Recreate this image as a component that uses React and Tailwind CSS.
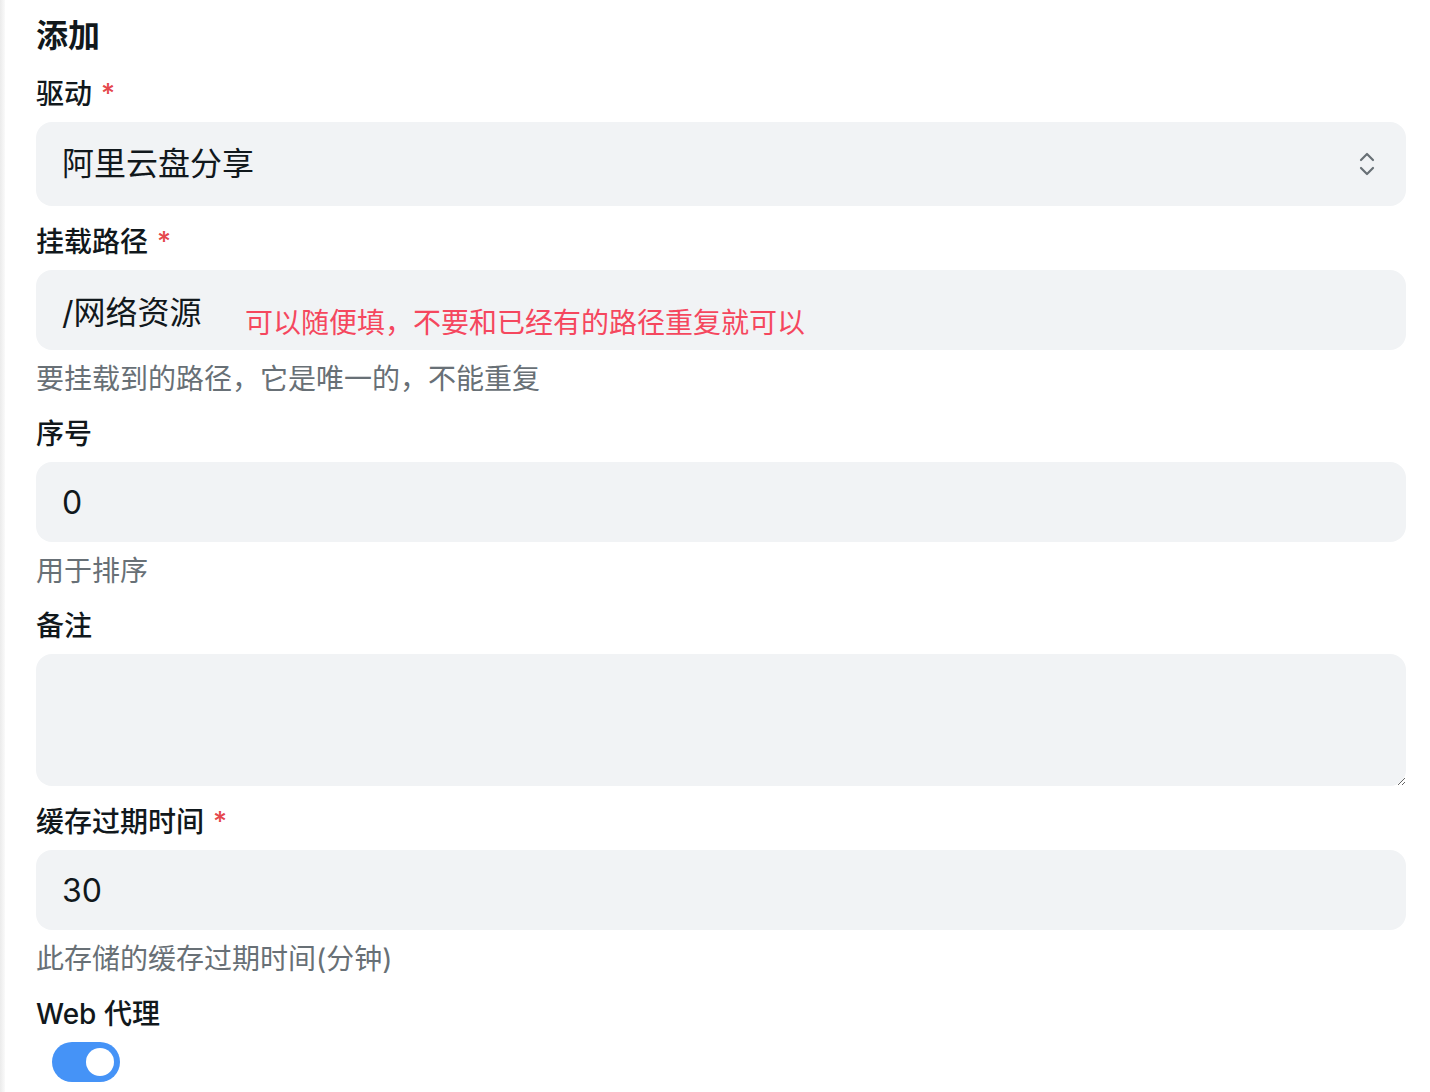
import React, { useState } from "react";

const FONT = { fontFamily: '"Inter", "Noto Sans CJK SC", sans-serif' };

const Label = ({ children, required }) => (
  <label className="flex h-10 items-center text-[28px] font-medium text-[#11181c]">
    {children}
    {required && <span className="ml-[9px] text-[27px] text-[#e5484d]">*</span>}
  </label>
);

const Help = ({ children }) => (
  <p className="mt-[10px] h-[38px] text-[28px] leading-[38px] text-[#687076]">
    {children}
  </p>
);

const inputCls =
  "mt-2 h-20 w-full rounded-2xl bg-[#f1f3f5] px-[26px] text-[32px] text-[#11181c] outline-none";

export default function App() {
  const [web, setWeb] = useState(true);

  return (
    <div className="flex min-h-[1092px] w-[1430px] bg-white" style={FONT}>
      {/* sidebar shadow edge */}
      <div className="w-[5px] shrink-0 bg-gradient-to-r from-[#ebebeb] to-[#fafafa]" />

      <div className="flex flex-1 flex-col pl-[31px] pr-6 pt-4">
        <h2 className="mb-[18px] flex h-10 items-center text-[32px] font-semibold text-[#11181c]">
          添加
        </h2>

        <div className="flex flex-col gap-4">
          {/* 驱动 */}
          <div className="flex flex-col">
            <Label required>驱动</Label>
            <div className="relative mt-2 flex h-[84px] w-full items-center rounded-2xl bg-[#f1f3f5] px-[26px] text-[32px] text-[#11181c]">
              阿里云盘分享
              <svg
                className="absolute right-[30px] top-[29px]"
                width="18"
                height="26"
                viewBox="0 0 18 26"
                fill="none"
                stroke="#687076"
                strokeWidth="2.2"
                strokeLinecap="round"
                strokeLinejoin="round"
              >
                <path d="M3 9l6-6 6 6" />
                <path d="M3 17l6 6 6-6" />
              </svg>
            </div>
          </div>

          {/* 挂载路径 */}
          <div className="flex flex-col">
            <Label required>挂载路径</Label>
            <div className="relative">
              <input className={inputCls} defaultValue="/网络资源" />
              <span className="absolute left-[209px] top-[40px] text-[28px] text-[#f5475e]">
                可以随便填，不要和已经有的路径重复就可以
              </span>
            </div>
            <Help>要挂载到的路径，它是唯一的，不能重复</Help>
          </div>

          {/* 序号 */}
          <div className="flex flex-col">
            <Label>序号</Label>
            <input className={inputCls} defaultValue="0" />
            <Help>用于排序</Help>
          </div>

          {/* 备注 */}
          <div className="flex flex-col">
            <Label>备注</Label>
            <textarea className="mt-2 h-[132px] w-full resize-y rounded-2xl bg-[#f1f3f5] px-[26px] py-4 text-[32px] text-[#11181c] outline-none" />
          </div>

          {/* 缓存过期时间 */}
          <div className="flex flex-col">
            <Label required>缓存过期时间</Label>
            <input className={inputCls} defaultValue="30" />
            <Help>此存储的缓存过期时间(分钟)</Help>
          </div>

          {/* Web 代理 */}
          <div className="flex flex-col">
            <Label>Web 代理</Label>
            <button
              type="button"
              onClick={() => setWeb(!web)}
              className={`ml-4 mt-2 flex h-10 w-[68px] items-center rounded-full p-[6px] ${
                web ? "justify-end bg-[#4593f7]" : "justify-start bg-[#d7dbdf]"
              }`}
            >
              <span className="h-7 w-7 rounded-full bg-white" />
            </button>
          </div>
        </div>
      </div>
    </div>
  );
}
